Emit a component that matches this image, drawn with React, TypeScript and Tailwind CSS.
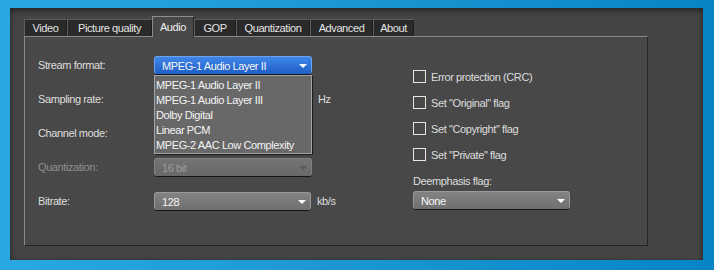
import React from "react";

const tabs = [
  { name: "Video", w: "w-[43px]" },
  { name: "Picture quality", w: "w-[85px]" },
  { name: "Audio", w: "w-[42px]", active: true },
  { name: "GOP", w: "w-[42px]" },
  { name: "Quantization", w: "w-[74px]" },
  { name: "Advanced", w: "w-[63px]" },
  { name: "About", w: "w-[41px]" },
];

function Arrow({ disabled }: { disabled?: boolean }) {
  return (
    <span
      className={`ml-auto mr-[4px] h-0 w-0 border-l-[4px] border-r-[4px] border-t-[4px] border-l-transparent border-r-transparent ${
        disabled ? "border-t-[#5a5a5a]" : "border-t-white"
      }`}
    />
  );
}

function Combo({
  value,
  w,
  blue,
  disabled,
}: {
  value: string;
  w: string;
  blue?: boolean;
  disabled?: boolean;
}) {
  const bg = blue
    ? "bg-gradient-to-b from-[#3f86e8] to-[#1f5ec6] border-[#6aa2ee]"
    : disabled
    ? "bg-gradient-to-b from-[#747474] to-[#686868] border-[#828282]"
    : "bg-gradient-to-b from-[#838383] to-[#6f6f6f] border-[#9a9a9a]";
  return (
    <div
      className={`${w} h-[18px] rounded-[3px] border-t border-l border-r ${bg} shadow-[0_1px_0_#161616] flex items-center pl-[7px] ${
        disabled ? "text-[#9c9c9c]" : "text-[#f6f6f6]"
      }`}
    >
      <span>{value}</span>
      <Arrow disabled={disabled} />
    </div>
  );
}

function Row({
  label,
  children,
  disabled,
}: {
  label: string;
  children: React.ReactNode;
  disabled?: boolean;
}) {
  return (
    <div className="flex items-center h-[18px] mb-[16px]">
      <span className={`w-[116px] ${disabled ? "text-[#8e8e8e]" : "text-[#dedede]"}`}>{label}</span>
      {children}
    </div>
  );
}

function Check({ label }: { label: string }) {
  return (
    <div className="flex items-center h-[13px] mb-[13px]">
      <span className="w-[13px] h-[13px] border border-[#e4e4e4] box-border" />
      <span className="ml-[5px] text-[#dedede]">{label}</span>
    </div>
  );
}

const items = [
  "MPEG-1 Audio Layer II",
  "MPEG-1 Audio Layer III",
  "Dolby Digital",
  "Linear PCM",
  "MPEG-2 AAC Low Complexity",
];

export default function App() {
  return (
    <div
      className="w-[714px] h-[270px] bg-gradient-to-r from-[#2aa8e1] to-[#0784c6] pt-[8px] pl-[10px] text-[11px] tracking-[-0.4px] leading-[14px]"
      style={{ fontFamily: '"Liberation Sans", Arial, sans-serif' }}
    >
      <div className="w-[693px] h-[252px] bg-[#454545] shadow-[inset_0_2px_6px_rgba(0,0,0,0.55)] pt-[8px] pl-[14px]">
        <div className="flex items-end h-[20px]">
          {tabs.map((t) =>
            t.active ? (
              <div
                key={t.name}
                className={`${t.w} h-[21px] -mb-px relative z-10 bg-[#484848] border-t border-l border-[#8c8c8c] border-r border-r-[#262626] flex items-center justify-center text-[#eeeeee]`}
              >
                {t.name}
              </div>
            ) : (
              <div
                key={t.name}
                className={`${t.w} h-[17px] bg-[#2a2a2a] border-t border-l border-[#5e5e5e] border-r border-r-[#1e1e1e] flex items-center justify-center text-[#e4e4e4]`}
              >
                {t.name}
              </div>
            )
          )}
        </div>
        <div className="w-[624px] h-[210px] bg-[#484848] border-t border-l border-[#8a8a8a] border-r border-b border-r-[#262626] border-b-[#262626] flex">
          <div className="w-[388px] pl-[13px] pt-[19px]">
            <Row label="Stream format:">
              <div className="relative">
                <Combo value="MPEG-1 Audio Layer II" w="w-[158px]" blue />
                <div className="absolute z-20 left-0 top-[19px] w-[158px] h-[79px] bg-[#686868] border border-[#a4a4a4] shadow-[1px_1px_0_#1c1c1c] py-px">
                  {items.map((it) => (
                    <div key={it} className="h-[15px] flex items-center pl-px text-[#f4f4f4]">
                      {it}
                    </div>
                  ))}
                </div>
              </div>
            </Row>
            <Row label="Sampling rate:">
              <Combo value="" w="w-[158px]" />
              <span className="ml-[6px] text-[#dedede]">Hz</span>
            </Row>
            <Row label="Channel mode:">
              <Combo value="" w="w-[158px]" />
            </Row>
            <Row label="Quantization:" disabled>
              <Combo value="16 bit" w="w-[158px]" disabled />
            </Row>
            <Row label="Bitrate:">
              <Combo value="128" w="w-[157px]" />
              <span className="ml-[6px] text-[#dedede]">kb/s</span>
            </Row>
          </div>
          <div className="pt-[33px]">
            <Check label="Error protection (CRC)" />
            <Check label={'Set "Original" flag'} />
            <Check label={'Set "Copyright" flag'} />
            <Check label={'Set "Private" flag'} />
            <div className="mt-[2px] text-[#dedede] h-[14px]">Deemphasis flag:</div>
            <div className="mt-[3px]">
              <Combo value="None" w="w-[157px]" />
            </div>
          </div>
        </div>
      </div>
    </div>
  );
}
